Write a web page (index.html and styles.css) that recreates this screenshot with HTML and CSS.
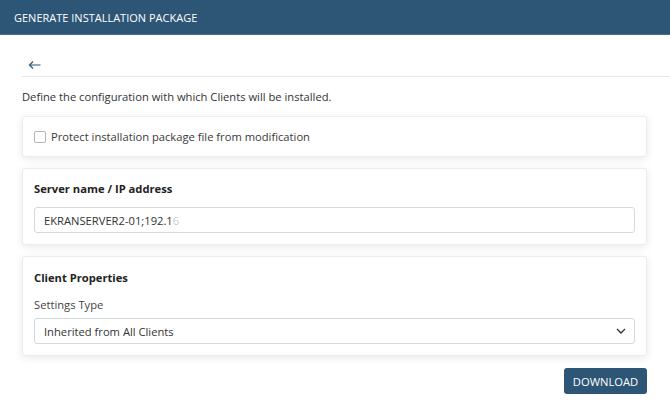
FILE: index.html
```html
<!DOCTYPE html>
<html lang="en">
<head>
  <meta charset="UTF-8">
  <title>Generate Installation Package</title>
  <link rel="stylesheet" href="styles.css">
</head>
<body>

  <div class="topbar">Generate Installation Package</div>

  <div class="page">
    <div class="backrow">
      <a class="back" href="#">
        <svg width="13" height="10" viewBox="0 0 13 10"><path d="M12.5 5H1.5M5 1.5L1.5 5L5 8.5" fill="none" stroke="#2d5576" stroke-width="1.2"/></svg>
      </a>
    </div>

    <p class="intro">Define the configuration with which Clients will be installed.</p>

    <div class="card card-check">
      <label class="check"><span class="box"></span>Protect installation package file from modification</label>
    </div>

    <div class="card">
      <h3>Server name / IP address</h3>
      <div class="field">
        <span>EKRANSERVER2-01;192.1</span><span class="fade">6</span>
      </div>
    </div>

    <div class="card card-props">
      <h3>Client Properties</h3>
      <div class="label">Settings Type</div>
      <div class="field select">
        <span>Inherited from All Clients</span>
        <svg width="10" height="6" viewBox="0 0 10 6"><path d="M1 1L5 5L9 1" fill="none" stroke="#333" stroke-width="1.3"/></svg>
      </div>
    </div>

    <div class="actions">
      <button>Download</button>
    </div>
  </div>

</body>
</html>
```

FILE: styles.css
```css
body {
  margin: 0;
  font-family: 'Open Sans', sans-serif;
  font-size: 11.2px;
  color: #333;
  background: #fff;
}
.topbar {
  background-color: #2d5576;
  color: #fff;
  height: 35px;
  line-height: 35px;
  padding-left: 14px;
  text-transform: uppercase;
  font-size: 11px;
  border-bottom: 1px solid #4a6d8a;
  box-sizing: border-box;
}
.page {
  padding: 0 23px 0 22px;
}
.backrow {
  height: 42px;
  border-bottom: 1px solid #e8e8e8;
  margin-right: -23px;
  box-sizing: border-box;
  padding-top: 23px;
  padding-left: 6px;
}
.back {
  display: inline-block;
  line-height: 0;
}
.intro {
  margin: 12px 0 11px;
  line-height: 16px;
}
.card {
  background: #fff;
  border: 1px solid #ececec;
  border-radius: 3px;
  box-shadow: 0 2px 8px rgba(0,0,0,0.09);
  padding: 12px 11px 11px;
  margin-bottom: 11px;
}
.card-check {
  padding: 11px;
}
.card-props {
  padding-top: 13px;
}
.check {
  display: flex;
  align-items: center;
  height: 17px;
  color: #3a3a3a;
}
.box {
  width: 10px;
  height: 10px;
  border: 1px solid #b5b5b5;
  border-radius: 2px;
  margin-right: 5px;
}
h3 {
  margin: 0 0 10px;
  font-size: 11.2px;
  font-weight: bold;
  line-height: 16px;
  color: #222;
}
.card-props h3 {
  margin-bottom: 11px;
}
.label {
  margin: 0 0 5px;
  line-height: 16px;
  color: #444;
}
.field {
  height: 26px;
  box-sizing: border-box;
  border: 1px solid #d4d7dc;
  border-radius: 3px;
  padding: 0 9px;
  display: flex;
  align-items: center;
  color: #333;
}
.fade {
  color: #ccc;
}
.select {
  justify-content: space-between;
  padding-right: 8px;
}
.actions {
  display: flex;
  justify-content: flex-end;
  margin-top: 12px;
}
button {
  background-color: #2d5576;
  color: #fff;
  border: none;
  border-radius: 3px;
  height: 26px;
  width: 83px;
  padding: 0;
  font-family: 'Open Sans', sans-serif;
  font-size: 11.2px;
  text-transform: uppercase;
  cursor: pointer;
}
```
